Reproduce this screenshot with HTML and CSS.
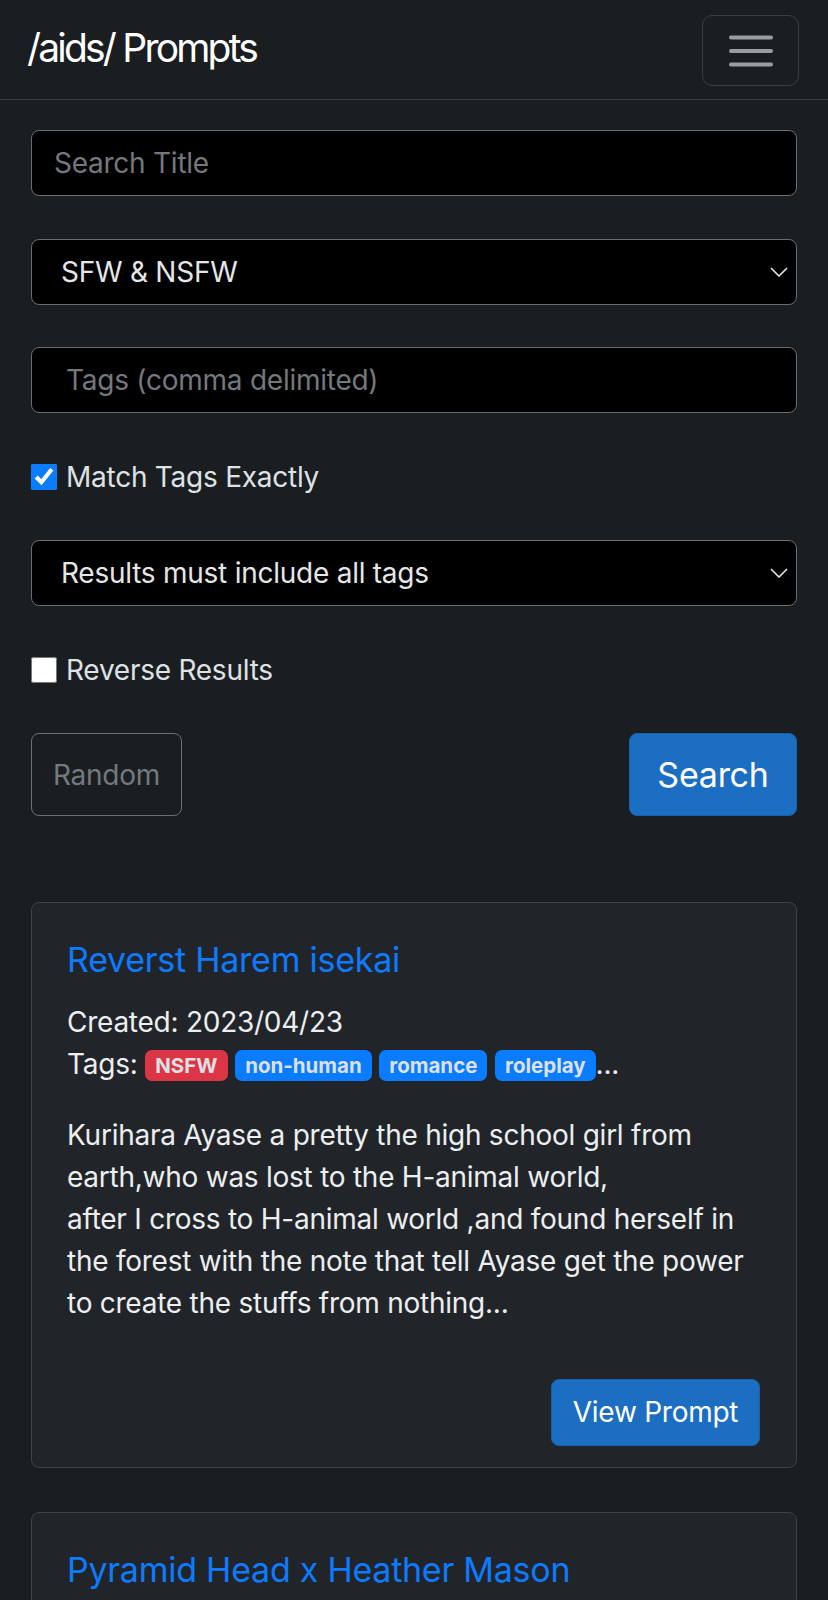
FILE: index.html
```html
<!DOCTYPE html>
<html lang="en">
<head>
    <meta charset="UTF-8">
    <meta name="viewport" content="width=device-width, initial-scale=1.0">
    <title>/aids/ Prompts</title>
    <link rel="stylesheet" href="styles.css">
</head>
<body>

    <!-- Barre du haut -->
    <nav class="navbar">
        <a class="brand" href="#">/aids/ Prompts</a>
        <button class="toggler" type="button" aria-label="Menu">
            <svg width="44" height="32" viewBox="0 0 44 32">
                <path d="M2 2.5h40M2 16h40M2 29.5h40" stroke="#9a9c9f" stroke-width="4" stroke-linecap="round" fill="none"/>
            </svg>
        </button>
    </nav>

    <main class="container">
        <!-- Formulaire de recherche -->
        <form class="search-form">
            <div class="group">
                <input type="text" class="field" placeholder="Search Title">
            </div>

            <div class="group select-wrap">
                <select class="field">
                    <option>SFW &amp; NSFW</option>
                    <option>SFW only</option>
                    <option>NSFW only</option>
                </select>
                <svg class="chevron" width="18" height="10" viewBox="0 0 18 10">
                    <path d="M1 1l8 8 8-8" stroke="#e6e6e6" stroke-width="1.6" fill="none"/>
                </svg>
            </div>

            <div class="group">
                <input type="text" class="field tags-field" placeholder="Tags (comma delimited)">
            </div>

            <div class="group">
                <label class="check"><input type="checkbox" checked> Match Tags Exactly</label>
            </div>

            <div class="group select-wrap">
                <select class="field">
                    <option>Results must include all tags</option>
                    <option>Results may include any tag</option>
                </select>
                <svg class="chevron" width="18" height="10" viewBox="0 0 18 10">
                    <path d="M1 1l8 8 8-8" stroke="#e6e6e6" stroke-width="1.6" fill="none"/>
                </svg>
            </div>

            <div class="group">
                <label class="check"><input type="checkbox"> Reverse Results</label>
            </div>

            <div class="actions">
                <button type="button" class="btn btn-outline">Random</button>
                <button type="submit" class="btn btn-primary btn-lg">Search</button>
            </div>
        </form>

        <!-- Résultats -->
        <div class="card">
            <div class="card-body">
                <h5 class="card-title"><a href="#">Reverst Harem isekai</a></h5>
                <div class="meta">Created: 2023/04/23</div>
                <div class="meta">Tags: <span class="badge badge-red">NSFW</span> <span class="badge">non-human</span> <span class="badge">romance</span> <span class="badge">roleplay</span>...</div>
                <p class="summary">Kurihara Ayase a pretty the high school girl from earth,who was lost to the H-animal world,
after I cross to H-animal world ,and found herself in the forest with the note that tell Ayase get the power to create the stuffs from nothing...</p>
                <div class="card-actions">
                    <a href="#" class="btn btn-primary">View Prompt</a>
                </div>
            </div>
        </div>

        <div class="card">
            <div class="card-body">
                <h5 class="card-title"><a href="#">Pyramid Head x Heather Mason</a></h5>
                <div class="meta">Created: 2023/04/22</div>
                <div class="meta">Tags: <span class="badge badge-red">NSFW</span> <span class="badge">horror</span> <span class="badge">monster</span>...</div>
            </div>
        </div>
    </main>

</body>
</html>
```

FILE: styles.css
```css
/* Police et fond sombre */
body {
    margin: 0;
    font-family: Inter, "Noto Sans", sans-serif;
    font-size: 28px;
    line-height: 1.5;
    letter-spacing: -0.25px;
    color: #dee2e6;
    background-color: #1b1e21;
}

a {
    color: #0d7bff;
    text-decoration: none;
}

/* Barre de navigation */
.navbar {
    height: 99px;
    display: flex;
    align-items: center;
    justify-content: space-between;
    padding: 0 29px 0 27px;
    border-bottom: 1px solid #3a3f44;
}

.brand {
    color: #fff;
    font-size: 39px;
    letter-spacing: -2.8px;
    word-spacing: 0;
    line-height: 1.2;
    margin-top: -2px;
}

.toggler {
    width: 97px;
    height: 71px;
    margin-top: 2px;
    display: flex;
    align-items: center;
    justify-content: center;
    background: transparent;
    border: 1px solid #3a3e43;
    border-radius: 10px;
    padding: 0;
}

/* Contenu */
.container {
    padding: 30px 31px 0 31px;
}

.group {
    margin-bottom: 42.5px;
}

.field {
    display: block;
    width: 100%;
    height: 66px;
    box-sizing: border-box;
    padding: 0 22px;
    font-family: inherit;
    font-size: 28px;
    letter-spacing: -0.25px;
    color: #e4e6e8;
    background-color: #000;
    border: 1.5px solid #676d73;
    border-radius: 8px;
    outline: none;
}

.field::placeholder {
    color: #74787d;
}

select.field {
    appearance: none;
    padding-left: 29px;
}

.tags-field {
    padding-left: 34px;
}

.select-wrap {
    position: relative;
}

.chevron {
    position: absolute;
    right: 9px;
    top: 28px;
    pointer-events: none;
}

/* Cases à cocher */
.check {
    display: flex;
    align-items: center;
    height: 42px;
}

.check input {
    width: 26px;
    height: 26px;
    margin: 0 9px 0 0;
    accent-color: #0a7cff;
}

/* Boutons */
.actions {
    display: flex;
    justify-content: space-between;
    margin-bottom: 86px;
}

.btn {
    display: inline-flex;
    align-items: center;
    justify-content: center;
    box-sizing: border-box;
    font-family: inherit;
    letter-spacing: -0.25px;
    border-radius: 8px;
    cursor: pointer;
}

.btn-outline {
    width: 151px;
    height: 83px;
    font-size: 28px;
    color: #74797e;
    background: transparent;
    border: 1.5px solid #6b7075;
}

.btn-primary {
    color: #fff;
    background-color: #1b6ec2;
    border: 1px solid #1861ac;
}

.btn-lg {
    width: 168px;
    height: 83px;
    font-size: 34px;
}

/* Cartes de résultats */
.card {
    background-color: #212529;
    border: 1px solid #3e4348;
    border-radius: 8px;
    margin-bottom: 44px;
}

.card-body {
    padding: 36px 36px 21px 35px;
}

.card-title {
    margin: 0 0 20px 0;
    font-size: 34px;
    font-weight: 400;
    line-height: 1.23;
}

.meta {
    color: #eceef0;
}

.badge {
    display: inline-block;
    padding: 0 10px;
    font-size: 20.5px;
    font-weight: 700;
    line-height: 31px;
    letter-spacing: 0;
    color: #dde1e6;
    background-color: #0a7cff;
    border-radius: 7px;
    vertical-align: 1px;
}

.badge-red {
    background-color: #dc3545;
}

.summary {
    margin: 29px 0 55px 0;
    white-space: pre-line;
    color: #eceef0;
}

.card-actions {
    display: flex;
    justify-content: flex-end;
}

.card-actions .btn {
    width: 209px;
    height: 67px;
    font-size: 28px;
}
```
